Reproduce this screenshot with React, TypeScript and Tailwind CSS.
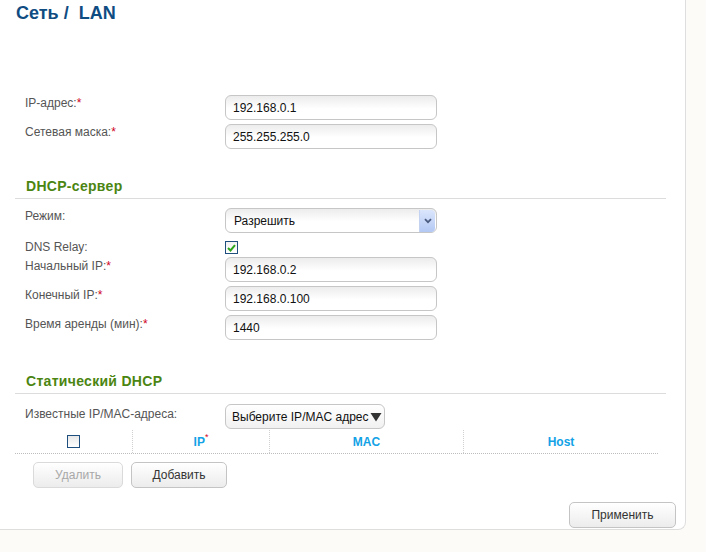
import type { ReactNode } from 'react'

const font = { fontFamily: '"Liberation Sans", Arial, sans-serif' }

const Req = () => <span className="text-[#d0021b]">*</span>

interface RowProps {
  label: ReactNode
  children: ReactNode
  className?: string
  labelClass?: string
}

const Row = ({ label, children, className = '', labelClass = 'pt-[1px]' }: RowProps) => (
  <div className={`flex items-start ${className}`}>
    <div className={`w-[225px] pl-[25px] text-[12px] leading-[14px] text-[#555] ${labelClass}`}>
      {label}
    </div>
    {children}
  </div>
)

const TextInput = ({ value }: { value: string }) => (
  <div className="w-[212px] h-[25px] flex items-center pl-[7px] border border-[#c6c6c6] rounded-[6px] bg-[linear-gradient(to_bottom,#ececec,#ffffff_55%)] text-[12px] text-[#111]">
    {value}
  </div>
)

const Heading = ({ children, className = '' }: { children: ReactNode; className?: string }) => (
  <div className={`ml-[15px] w-[651px] pl-[11px] pb-[4px] border-b border-[#dcdcdc] ${className}`}>
    <div className="text-[14px] leading-[16px] font-bold text-[#4b8512] tracking-[0.3px]">{children}</div>
  </div>
)

const Button = ({ children, disabled, className = '' }: { children: ReactNode; disabled?: boolean; className?: string }) => (
  <button
    type="button"
    disabled={disabled}
    className={`h-[26px] flex items-center justify-center rounded-[5px] border text-[12px] bg-[linear-gradient(to_bottom,#ffffff,#ececec)] ${
      disabled ? 'border-[#dadada] text-[#a8a8a8]' : 'border-[#c4c4c4] text-[#333]'
    } ${className}`}
  >
    {children}
  </button>
)

export default function App() {
  return (
    <div className="w-[706px] h-[552px] bg-[#fcfbf7] overflow-hidden" style={font}>
      <div className="w-[686px] h-[530px] bg-white border-r border-b border-[#dedede] rounded-br-[8px]">
        {/* Title */}
        <div className="pt-[2px] pl-[16px] text-[18px] leading-[22px] font-bold text-[#0f4c81] whitespace-pre">
          {'Сеть /  LAN'}
        </div>

        {/* LAN */}
        <Row className="mt-[71px]" label={<>IP-адрес:<Req /></>}>
          <TextInput value="192.168.0.1" />
        </Row>
        <Row className="mt-[4px]" label={<>Сетевая маска:<Req /></>}>
          <TextInput value="255.255.255.0" />
        </Row>

        {/* DHCP */}
        <Heading className="mt-[29px]">DHCP-сервер</Heading>
        <Row className="mt-[9px]" label="Режим:">
          <div className="w-[212px] h-[25px] flex items-center pl-[8px] border border-[#c6c6c6] rounded-[6px] bg-[linear-gradient(to_bottom,#ececec,#ffffff_55%)] text-[12px] text-[#111]">
            <span className="flex-1">Разрешить</span>
            <span className="w-[16px] h-[22px] mr-[1px] rounded-r-[4px] border-l border-[#c3d2f0] bg-[linear-gradient(to_bottom,#dbe6fc,#b3c8f3)] flex items-center justify-center">
              <svg width="8" height="6" viewBox="0 0 8 6">
                <path d="M1 1.2 L4 4.2 L7 1.2" fill="none" stroke="#4a5c80" strokeWidth="1.8" />
              </svg>
            </span>
          </div>
        </Row>
        <Row className="mt-[7px] h-[14px]" label="DNS Relay:" labelClass="">
          <span className="mt-[1px] w-[13px] h-[13px] border border-[#1f4f7e] bg-[linear-gradient(to_bottom,#f2f2f2,#ffffff)] flex items-center justify-center">
            <svg width="9" height="8" viewBox="0 0 9 8">
              <path d="M1 4 L3.5 6.5 L8 1.2" fill="none" stroke="#2ca51c" strokeWidth="2" />
            </svg>
          </span>
        </Row>
        <Row className="mt-[3px]" label={<>Начальный IP:<Req /></>} labelClass="pt-[2px]">
          <TextInput value="192.168.0.2" />
        </Row>
        <Row className="mt-[4px]" label={<>Конечный IP:<Req /></>} labelClass="pt-[2px]">
          <TextInput value="192.168.0.100" />
        </Row>
        <Row className="mt-[4px]" label={<>Время аренды (мин):<Req /></>} labelClass="pt-[2px]">
          <TextInput value="1440" />
        </Row>

        {/* Static DHCP */}
        <Heading className="mt-[33px]">Статический DHCP</Heading>
        <Row className="mt-[10px]" label="Известные IP/MAC-адреса:" labelClass="pt-[3px]">
          <div className="w-[160px] h-[25px] flex items-center pl-[6px] pr-[2px] border border-[#c6c6c6] rounded-[6px] bg-[linear-gradient(to_bottom,#ffffff,#f1f1f1)] text-[12px] text-[#111]">
            <span className="flex-1 overflow-hidden whitespace-nowrap">Выберите IP/MAC адрес</span>
            <svg width="12" height="10" viewBox="0 0 12 10" className="shrink-0">
              <path d="M0.5 1 L11.5 1 L6 9.5 Z" fill="#333" />
            </svg>
          </div>
        </Row>

        <div className="ml-[15px] w-[643px] h-[24px] mt-[1px] flex border-b border-dotted border-[#bdbdbd] text-[12px] font-bold text-[#12a2e6]">
          <div className="w-[117px] flex items-center justify-center">
            <span className="w-[13px] h-[13px] border border-[#1f4f7e] bg-[linear-gradient(to_bottom,#e8e8e8,#ffffff)]" />
          </div>
          <div className="w-[137px] border-l border-dotted border-[#d0d0d0] flex items-center justify-center">
            IP<sup className="text-[#d0021b] text-[9px] font-normal">*</sup>
          </div>
          <div className="w-[194px] border-l border-dotted border-[#d0d0d0] flex items-center justify-center">MAC</div>
          <div className="flex-1 border-l border-dotted border-[#d0d0d0] flex items-center justify-center">Host</div>
        </div>

        <div className="flex gap-[8px] ml-[33px] mt-[8px]">
          <Button disabled className="w-[90px]">Удалить</Button>
          <Button className="w-[96px]">Добавить</Button>
        </div>

        <div className="flex mt-[14px] ml-[569px]">
          <Button className="w-[107px]">Применить</Button>
        </div>
      </div>
    </div>
  )
}
